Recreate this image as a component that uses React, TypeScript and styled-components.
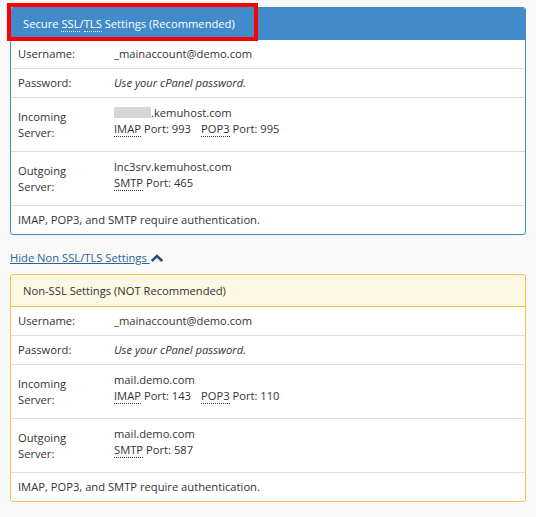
import React from "react";
import styled, { createGlobalStyle } from "styled-components";

const Global = createGlobalStyle`
  html, body { margin: 0; padding: 0; background: #f9f9f9; }
  body { font-family: "Open Sans", "Liberation Sans", sans-serif; font-size: 11.2px; color: #333; }
`;

const Page = styled.div`
  padding: 7px 10px 10px 10px;
  display: flex;
  flex-direction: column;
`;

const Panel = styled.div<{ $tone: "blue" | "yellow" }>`
  position: relative;
  border: 1px solid ${(p) => (p.$tone === "blue" ? "#428bca" : "#f5c342")};
  border-radius: 3px;
  background: #fff;
`;

const PanelHead = styled.div<{ $tone: "blue" | "yellow" }>`
  height: 31px;
  display: flex;
  align-items: center;
  padding: 0 12px;
  background: ${(p) => (p.$tone === "blue" ? "#428bca" : "#fcf8e3")};
  color: ${(p) => (p.$tone === "blue" ? "#fff" : "#333")};
  border-bottom: 1px solid ${(p) => (p.$tone === "blue" ? "#428bca" : "#f5c342")};
  border-radius: 2px 2px 0 0;
`;

const Highlight = styled.div`
  position: absolute;
  left: -4px;
  top: -5px;
  width: 243px;
  height: 30px;
  border: 4px solid #f00;
  pointer-events: none;
`;

const Row = styled.div<{ $last?: boolean }>`
  display: grid;
  grid-template-columns: 96px 1fr;
  align-items: center;
  padding: 6px 7px;
  line-height: 16px;
  border-bottom: ${(p) => (p.$last ? "none" : "1px solid #ddd")};
`;

const Label = styled.div`
  width: 70px;
`;

const Value = styled.div<{ $tall?: boolean }>`
  padding-top: ${(p) => (p.$tall ? "1px" : "0")};
  padding-bottom: ${(p) => (p.$tall ? "8px" : "0")};
`;

const Italic = styled.span`
  font-style: italic;
`;

const Abbr = styled.abbr`
  text-decoration: none;
  border-bottom: 1px dotted currentColor;
`;

const PortGap = styled.span`
  display: inline-block;
  width: 10px;
`;

const Blur = styled.span`
  display: inline-block;
  width: 37px;
  height: 11px;
  background: #d6d6d6;
  vertical-align: -1px;
`;

const Toggle = styled.a`
  display: inline-flex;
  align-items: center;
  align-self: flex-start;
  margin: 15px 0 8px 0;
  color: #2a6496;
  text-decoration: none;
  line-height: 16px;
`;

const ToggleText = styled.span`
  text-decoration: underline;
  white-space: pre;
`;

const Note = styled.div`
  grid-column: 1 / span 2;
`;

function ServerValue(props: { host: React.ReactNode; ports: [string, string][] }) {
  return (
    <Value $tall>
      <div>{props.host}</div>
      <div>
        {props.ports.map(([name, port], i) => (
          <React.Fragment key={name}>
            {i > 0 && <PortGap />}
            <Abbr title={name}>{name}</Abbr> Port: {port}
          </React.Fragment>
        ))}
      </div>
    </Value>
  );
}

function SettingsRows(props: {
  inHost: React.ReactNode;
  inPorts: [string, string][];
  outHost: string;
  outPort: string;
}) {
  return (
    <>
      <Row>
        <Label>Username:</Label>
        <Value>_mainaccount@demo.com</Value>
      </Row>
      <Row>
        <Label>Password:</Label>
        <Value>
          <Italic>Use your cPanel password.</Italic>
        </Value>
      </Row>
      <Row>
        <Label>Incoming Server:</Label>
        <ServerValue host={props.inHost} ports={props.inPorts} />
      </Row>
      <Row>
        <Label>Outgoing Server:</Label>
        <ServerValue host={props.outHost} ports={[["SMTP", props.outPort]]} />
      </Row>
      <Row $last>
        <Note>IMAP, POP3, and SMTP require authentication.</Note>
      </Row>
    </>
  );
}

const Chevron = () => (
  <svg width="14" height="10" viewBox="0 0 14 10">
    <path d="M1.8 8 L7 3 L12.2 8" fill="none" stroke="#24527a" strokeWidth="2.6" />
  </svg>
);

export default function App() {
  return (
    <>
      <Global />
      <Page>
        <Panel $tone="blue">
          <PanelHead $tone="blue">
            <span>
              Secure <Abbr>SSL</Abbr>/<Abbr>TLS</Abbr> Settings (Recommended)
            </span>
          </PanelHead>
          <Highlight />
          <SettingsRows
            inHost={
              <>
                <Blur />.kemuhost.com
              </>
            }
            inPorts={[
              ["IMAP", "993"],
              ["POP3", "995"],
            ]}
            outHost="lnc3srv.kemuhost.com"
            outPort="465"
          />
        </Panel>
        <Toggle href="#">
          <ToggleText>Hide Non SSL/TLS Settings </ToggleText>
          <Chevron />
        </Toggle>
        <Panel $tone="yellow">
          <PanelHead $tone="yellow">Non-SSL Settings (NOT Recommended)</PanelHead>
          <SettingsRows
            inHost="mail.demo.com"
            inPorts={[
              ["IMAP", "143"],
              ["POP3", "110"],
            ]}
            outHost="mail.demo.com"
            outPort="587"
          />
        </Panel>
      </Page>
    </>
  );
}
